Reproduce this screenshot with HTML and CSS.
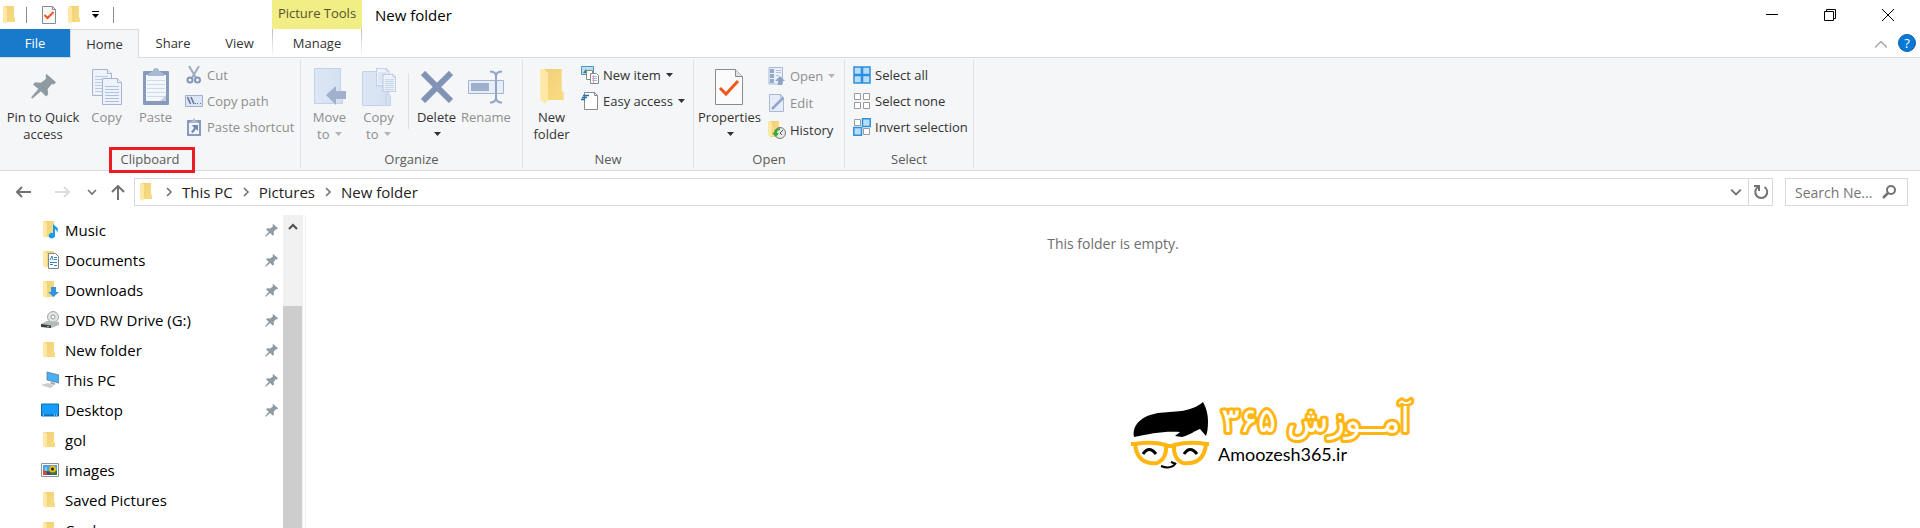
FILE: index.html
```html
<!DOCTYPE html>
<html lang="en">
<head>
  <meta charset="UTF-8">
  <title>New folder</title>
  <link rel="stylesheet" href="styles.css">
</head>
<body>

  <!-- shared icons -->
  <svg class="defs" width="0" height="0" aria-hidden="true">
    <defs>
      <linearGradient id="gold" x1="0" x2="1" y1="0" y2="1">
        <stop offset="0" stop-color="#f0d078"/>
        <stop offset="1" stop-color="#f9dc82"/>
      </linearGradient>
      <linearGradient id="pale" x1="0" x2="1">
        <stop offset="0" stop-color="#dde7f5"/>
        <stop offset="1" stop-color="#d3e0f2"/>
      </linearGradient>
    </defs>
    <symbol id="folder" viewBox="0 0 12 18">
      <path d="M2 0h9v11l1 1v4H2z" fill="url(#gold)"/>
      <path d="M0 0h2l2 2v13l-1 3-3-2z" fill="#ffe8a6"/>
    </symbol>
    <symbol id="check" viewBox="0 0 28 36">
      <path d="M.5.5h20l7 7v28H.5z" fill="#fbfbfb" stroke="#8b8b8b"/>
      <path d="M20.500.5v7h7" fill="#e0e0e0" stroke="#8b8b8b"/>
      <path d="M5 19l6 6L23 12" fill="none" stroke="#f1571a" stroke-width="3"/>
    </symbol>
    <symbol id="pin" viewBox="0 0 24 24">
      <path d="M15 0l9 8-2 2-2-.5-4 5 .5 5-2 2-5-5-8 7-1.500-1 7-8-5-4.500 2-2 5.500.500 5-4-.500-3z" fill="#8f9ba3"/>
    </symbol>
    <symbol id="pages" viewBox="0 0 30 36">
      <g fill="#eef3fb" stroke="#a3b5d3">
        <path d="M.5.5h15l4 4v22H.5z"/>
        <path d="M15.500.5v4h4"/>
        <path d="M3 7.500h13M3 10.500h13M3 13.500h13M3 16.500h13M3 19.500h13M3 22.500h13" stroke="#bccbe2"/>
        <path d="M10.500 9.500h15l4 4v22h-19z"/>
        <path d="M25.500 9.500v4h4"/>
        <path d="M13 17.500h14M13 20.500h14M13 23.500h14M13 26.500h14M13 29.500h14M13 32.500h14" stroke="#b1c1db"/>
      </g>
    </symbol>
    <symbol id="down" viewBox="0 0 7 4">
      <path d="M0 0h7L3.500 4z" fill="currentColor"/>
    </symbol>
    <symbol id="chevron" viewBox="0 0 10 10">
      <path d="M1 3l4 4 4-4" fill="none" stroke="currentColor" stroke-width="1.600"/>
    </symbol>
  </svg>

  <header class="titlebar">
    <div class="quick">
      <svg class="mini-folder"><use href="#folder"/></svg>
      <span class="bar"></span>
      <button class="quick-btn" aria-label="Properties">
        <svg width="14" height="18" viewBox="0 0 14 18"><path d="M.5.5h10l3 3v14H.5z" fill="#f8f8f8" stroke="#8b8b8b"/><path d="M10.500.5v3h3" fill="none" stroke="#8b8b8b"/><path d="M2.500 9l3 3L11.500 6" fill="none" stroke="#f1571a" stroke-width="2"/></svg>
      </button>
      <button class="quick-btn" aria-label="New folder"><svg class="mini-folder"><use href="#folder"/></svg></button>
      <button class="quick-btn" aria-label="Customize toolbar">
        <svg width="7" height="7" viewBox="0 0 7 7"><path d="M0 0h7v1H0zM0 3h7L3.500 7z"/></svg>
      </button>
      <span class="bar"></span>
    </div>
    <div class="tools">Picture Tools</div>
    <h1>New folder</h1>
    <div class="window-buttons">
      <button aria-label="Minimize"><svg width="12" height="12"><path d="M0 5.500h12" stroke="#000"/></svg></button>
      <button aria-label="Restore"><svg width="12" height="12" fill="none" stroke="#000"><path d="M.5 2.500h9v9h-9zM2.500 2.500v-2h9v9h-2"/></svg></button>
      <button aria-label="Close"><svg width="12" height="12"><path d="M0 0l12 12M12 0L0 12" stroke="#000"/></svg></button>
    </div>
  </header>

  <nav class="tabs">
    <button class="tab file">File</button>
    <button class="tab active">Home</button>
    <button class="tab share">Share</button>
    <button class="tab view">View</button>
    <button class="tab manage">Manage</button>
    <div class="tab-end">
      <button aria-label="Collapse ribbon"><svg width="12" height="7"><path d="M0 6.500l6-6 6 6" fill="none" stroke="#a8a8a8" stroke-width="1.500"/></svg></button>
      <button class="help" aria-label="Help">?</button>
    </div>
  </nav>

  <section class="ribbon">
    <div class="group clipboard">
      <div class="items">
        <button class="big pin-btn">
          <span class="pic"><svg width="25" height="25"><use href="#pin"/></svg></span>
          Pin to Quick<br>access
        </button>
        <button class="big off">
          <span class="pic"><svg width="30" height="36"><use href="#pages"/></svg></span>
          Copy
        </button>
        <button class="big off">
          <span class="pic">
            <svg width="26" height="37" viewBox="0 0 26 37">
              <rect y="3" width="26" height="34" rx="1" fill="#899bbd"/>
              <path d="M3 7h20v26H3z" fill="#f3f6fb"/>
              <path d="M4 12.500h18M4 16.500h18M4 20.500h18M4 24.500h18M4 28.500h18" stroke="#cfdaeb"/>
              <path d="M5 8V6l5-3q0-3 3-3t3 3l5 3v2z" fill="#aab9d2"/>
              <path d="M17 33h6v-6z" fill="#c3d0e4"/>
            </svg>
          </span>
          Paste
        </button>
        <div class="small-col">
          <button class="small off">
            <svg viewBox="0 0 18 18"><path d="M4 0l7 12M14 0L7 12" stroke="#9aabc8" stroke-width="2"/><g fill="none" stroke="#8195b8" stroke-width="2"><circle cx="5" cy="14" r="2.500"/><circle cx="12.500" cy="14" r="2.500"/></g></svg>
            Cut
          </button>
          <button class="small off">
            <svg viewBox="0 0 18 18"><path d="M.5 3.500h17v11H.5z" fill="#dbe5f3" stroke="#9fb1cf"/><path d="M2.500 5l3 7M6 5l3 7" stroke="#5d7499" stroke-width="1.500"/><path d="M10 11h1v1h-1zM12 11h1v1h-1zM15 11h1v1h-1z" fill="#5d7499"/></svg>
            Copy path
          </button>
          <button class="small off">
            <svg viewBox="0 0 18 18"><path d="M2 2h14v16H2z" fill="#899bbd"/><path d="M4 5h10v11H4z" fill="#f0f4fa"/><path d="M5 4l3-2q1-4 2 0l3 2v1H5z" fill="#aab9d2"/><path d="M7 7h6v6l-2-2-3 4-2-1 3-4z" fill="#7288ae"/></svg>
            Paste shortcut
          </button>
        </div>
      </div>
      <h2>Clipboard<span class="mark"></span></h2>
    </div>

    <div class="group organize">
      <div class="items">
        <button class="big off">
          <span class="pic">
            <svg width="32" height="37" viewBox="0 0 32 37"><path d="M.5.5h26v21l2 4v10H.5z" fill="url(#pale)" stroke="#c4d2e8"/><path d="M12 27l10-9v5h10v8H22v6z" fill="#a1b1cd"/></svg>
          </span>
          Move<br>to <svg class="down"><use href="#down"/></svg>
        </button>
        <button class="big off">
          <span class="pic">
            <svg width="34" height="38" viewBox="0 0 34 38"><path d="M.5 3.500h26v21l2 4v9H.5z" fill="url(#pale)" stroke="#c4d2e8"/><path d="M24 37V27l2-3" fill="none" stroke="#bfcee5"/><svg x="14" width="20" height="24"><use href="#pages"/></svg></svg>
          </span>
          Copy<br>to <svg class="down"><use href="#down"/></svg>
        </button>
        <span class="split"></span>
        <button class="big">
          <span class="pic"><svg width="32" height="32"><path d="M2 2l28 28M30 2L2 30" stroke="#8194b5" stroke-width="6"/></svg></span>
          Delete<br><svg class="down"><use href="#down"/></svg>
        </button>
        <button class="big off rename">
          <span class="pic">
            <svg width="36" height="34" viewBox="0 0 36 34"><path d="M.5 10.500h35v13H.5z" fill="#e6eefa" stroke="#a3b5d3"/><path d="M3 13h18v8H3z" fill="#9fb0cd"/><path d="M22 1.500q6 0 6 5v21q0 5-6 5M34 1.500q-6 0-6 5v21q0 5 6 5" fill="none" stroke="#91a4c4" stroke-width="2"/></svg>
          </span>
          Rename
        </button>
      </div>
      <h2>Organize</h2>
    </div>

    <div class="group new">
      <div class="items">
        <button class="big">
          <span class="pic"><svg width="24" height="35"><use href="#folder"/></svg></span>
          New<br>folder
        </button>
        <div class="small-col">
          <button class="small">
            <svg viewBox="0 0 18 18"><path d="M.5.5h12v8H.5z" fill="#b9def2" stroke="#4d93b8"/><path d="M2 7l3-4 2 4z" fill="#397b64"/><path d="M5.500 4.500h6v9h-6z" fill="#fff" stroke="#888"/><path d="M9.500 7.500h6l2 2v8h-8z" fill="#fff" stroke="#888"/><path d="M11 10.500h5M11 12.500h5M11 14.500h5" stroke="#9fb4ee"/><path d="M12.500 9v8" stroke="#f09a9a"/></svg>
            New item <svg class="down"><use href="#down"/></svg>
          </button>
          <button class="small">
            <svg viewBox="0 0 18 18"><path d="M3.500.5h10l3 3v14h-13z" fill="#fff" stroke="#888"/><path d="M13.500.5v3h3" fill="none" stroke="#888"/><path d="M2 3.500h6M1 5.500h5M0 7.500h4" stroke="#1f6fad" stroke-width="1.500"/></svg>
            Easy access <svg class="down"><use href="#down"/></svg>
          </button>
        </div>
      </div>
      <h2>New</h2>
    </div>

    <div class="group open">
      <div class="items">
        <button class="big properties">
          <span class="pic"><svg width="28" height="36"><use href="#check"/></svg></span>
          Properties<br><svg class="down"><use href="#down"/></svg>
        </button>
        <div class="small-col">
          <button class="small off">
            <svg viewBox="0 0 18 18"><path d="M1 .5h13.500V17H1z" fill="#eaf0f9" stroke="#a9b9d5"/><path d="M2 2h4v4H2zM2 7h4v4H2zM2 12h4v4H2z" fill="#95a8c9"/><path d="M8 3.500h5M8 5.500h5M8 8.500h3" stroke="#b4c3dc"/><path d="M12 9l5 5h-3v4h-4v-4H7z" fill="#8fa3c5"/></svg>
            Open <svg class="down"><use href="#down"/></svg>
          </button>
          <button class="small off">
            <svg viewBox="0 0 18 18"><path d="M1.500.5h11l3 3v14h-14z" fill="#e6edf8" stroke="#a9b9d5"/><path d="M12.500.5v3h3" fill="none" stroke="#a9b9d5"/><path d="M4 15l11-11" stroke="#94a7c8" stroke-width="2.500"/></svg>
            Edit
          </button>
          <button class="small">
            <svg viewBox="0 0 18 18"><path d="M2 0h9v16H2z" fill="url(#gold)"/><path d="M0 0h2l2 2v13H1L0 14z" fill="#ffe8a6"/><circle cx="12" cy="12" r="5.500" fill="#e8e8e8" stroke="#777"/><path d="M12 12l3-3M12 12l2 2" fill="none" stroke="#555"/><path d="M12 7q-5 0-6 5H4l4 4 3-4H9q0-3 3-3z" fill="#3aa935"/></svg>
            History
          </button>
        </div>
      </div>
      <h2>Open</h2>
    </div>

    <div class="group select">
      <div class="items">
        <div class="small-col">
          <button class="small">
            <svg viewBox="0 0 18 18"><path d="M1 1h7.500v7.500H1zM9.500 1H17v7.500H9.500zM1 9.500h7.500V17H1zM9.500 9.500H17V17H9.500z" fill="#b5defb" stroke="#2e8fdd" stroke-width="1.500"/></svg>
            Select all
          </button>
          <button class="small">
            <svg viewBox="0 0 18 18"><path d="M1.500 1.500h6v6h-6zM10.500 1.500h6v6h-6zM1.500 10.500h6v6h-6zM10.500 10.500h6v6h-6z" fill="#fff" stroke="#9a9a9a"/></svg>
            Select none
          </button>
          <button class="small">
            <svg viewBox="0 0 18 18"><path d="M1.500 1.500h6v6h-6zM10.500 10.500h6v6h-6z" fill="#fff" stroke="#9a9a9a"/><path d="M9.500.8h7.700v7.700H9.500zM.8 9.500h7.700v7.700H.8z" fill="#b5defb" stroke="#2e8fdd" stroke-width="1.500"/></svg>
            Invert selection
          </button>
        </div>
      </div>
      <h2>Select</h2>
    </div>
  </section>

  <div class="address-row">
    <div class="arrows">
      <button aria-label="Back"><svg width="15" height="12"><path d="M15 6H1M6 1L1 6l5 5" fill="none" stroke="#727272" stroke-width="2"/></svg></button>
      <button aria-label="Forward"><svg width="15" height="12"><path d="M0 6h14M9 1l5 5-5 5" fill="none" stroke="#dcdcdc" stroke-width="2"/></svg></button>
      <button class="recent" aria-label="Recent locations"><svg width="10" height="10"><use href="#chevron"/></svg></button>
      <button aria-label="Up"><svg width="14" height="15"><path d="M7 15V1M1 7l6-6 6 6" fill="none" stroke="#727272" stroke-width="2"/></svg></button>
    </div>
    <div class="address">
      <svg class="mini-folder"><use href="#folder"/></svg>
      <svg class="crumb-arrow"><use href="#chevron"/></svg>
      <a href="#">This PC</a>
      <svg class="crumb-arrow"><use href="#chevron"/></svg>
      <a href="#">Pictures</a>
      <svg class="crumb-arrow"><use href="#chevron"/></svg>
      <a href="#">New folder</a>
      <button class="history" aria-label="Previous locations"><svg width="12" height="12"><use href="#chevron"/></svg></button>
      <button class="refresh" aria-label="Refresh">
        <svg width="16" height="16" viewBox="0 0 16 16"><path d="M5 3A6 6 0 1 0 11.500 3" fill="none" stroke="#727272" stroke-width="2"/><path d="M1 2h5v5" fill="none" stroke="#727272" stroke-width="2"/></svg>
      </button>
    </div>
    <label class="search">
      <input type="text" aria-label="Search New folder" placeholder="Search Ne...">
      <svg width="14" height="14"><circle cx="9" cy="5" r="4" fill="none" stroke="#727272" stroke-width="2"/><path d="M6 8l-5 5" stroke="#727272" stroke-width="2.500"/></svg>
    </label>
  </div>

  <main class="content">
    <aside class="sidebar">
      <ul class="places">
        <li>
          <svg class="icon" viewBox="0 0 18 18"><path d="M4 0h9v16H4z" fill="url(#gold)"/><path d="M2 0h2l2 2v13l-1 2-3-2z" fill="#ffe8a6"/><path d="M12 2c0 3 5 3 5 7l-1 3c0-3-1-3-2-4v6a3.200 2.800 0 1 1-2-2z" fill="#149cf0"/></svg>
          <a href="#">Music</a><svg class="pin"><use href="#pin"/></svg>
        </li>
        <li>
          <svg class="icon" viewBox="0 0 18 18"><path d="M4 0h9v16H4z" fill="url(#gold)"/><path d="M2 0h2l2 2v13l-1 2-3-2z" fill="#ffe8a6"/><path d="M7.500 2.500h7l3 3v12h-10z" fill="#fff" stroke="#7d858a"/><path d="M9 9l2-4 1 4M13 6.500h3M13 8.500h3M9 11.500h7M9 13.500h3M13 14.500h3" fill="none" stroke="#3183bd"/></svg>
          <a href="#">Documents</a><svg class="pin"><use href="#pin"/></svg>
        </li>
        <li>
          <svg class="icon" viewBox="0 0 18 18"><path d="M4 0h9v16H4z" fill="url(#gold)"/><path d="M2 0h2l2 2v13l-1 2-3-2z" fill="#ffe8a6"/><path d="M10 6h5v5h3l-5.500 5L7 11h3z" fill="#3292e4"/></svg>
          <a href="#">Downloads</a><svg class="pin"><use href="#pin"/></svg>
        </li>
        <li>
          <svg class="icon" viewBox="0 0 18 18"><circle cx="12" cy="6" r="5.500" fill="#dfe3e5" stroke="#a5a9ab"/><circle cx="12" cy="6" r="2" fill="#fff" stroke="#999"/><path d="M0 13l6-3 12 1v3l-8 3-10-2z" fill="#b6b9bb"/><path d="M0 13l10 1.500V17L0 16z" fill="#3d4042"/><path d="M6 15h2v1H6z" fill="#6fd45b"/></svg>
          <a href="#">DVD RW Drive (G:)</a><svg class="pin"><use href="#pin"/></svg>
        </li>
        <li>
          <svg class="icon" viewBox="0 0 18 18"><path d="M4 1h9v10l1 1v4H4z" fill="url(#gold)"/><path d="M2 1h2l2 2v12l-1 2-3-2z" fill="#ffe8a6"/></svg>
          <a href="#">New folder</a><svg class="pin"><use href="#pin"/></svg>
        </li>
        <li>
          <svg class="icon" viewBox="0 0 18 18"><path d="M6 1l12 3v8L6 9z" fill="#49aef2" stroke="#5b7c92" stroke-width=".8"/><path d="M10 11l4 1v2l-5-1z" fill="#9eabb3"/><path d="M0 14l7-2 6 3-4 2z" fill="#c6cdd1"/></svg>
          <a href="#">This PC</a><svg class="pin"><use href="#pin"/></svg>
        </li>
        <li>
          <svg class="icon" viewBox="0 0 18 18"><path d="M.5 3h17v12H.5z" fill="#169dfb" stroke="#0a6cb5"/><path d="M1 14h16" stroke="#0a5c9c"/><path d="M2 14h1M13 14h1M15 14h1" stroke="#fff"/></svg>
          <a href="#">Desktop</a><svg class="pin"><use href="#pin"/></svg>
        </li>
        <li>
          <svg class="icon" viewBox="0 0 18 18"><path d="M4 1h9v10l1 1v4H4z" fill="url(#gold)"/><path d="M2 1h2l2 2v12l-1 2-3-2z" fill="#ffe8a6"/></svg>
          <a href="#">gol</a>
        </li>
        <li>
          <svg class="icon" viewBox="0 0 18 18"><path d="M.5 2.500h17v13H.5z" fill="#fff" stroke="#959595"/><path d="M2 4h14v6H2z" fill="#4b9fe8"/><path d="M2 10h14v4H2z" fill="#337a36"/><path d="M2 9l3 2 1 3H2z" fill="#e6492d"/><path d="M4 6h2v4H4z" fill="#8bc6f2"/><circle cx="11.500" cy="8" r="3.500" fill="#e8b91a"/><circle cx="11.500" cy="8" r="1.500" fill="#332318"/><path d="M6 11h3v3H6z" fill="#503ba1"/></svg>
          <a href="#">images</a>
        </li>
        <li>
          <svg class="icon" viewBox="0 0 18 18"><path d="M4 1h9v10l1 1v4H4z" fill="url(#gold)"/><path d="M2 1h2l2 2v12l-1 2-3-2z" fill="#ffe8a6"/></svg>
          <a href="#">Saved Pictures</a>
        </li>
        <li>
          <svg class="icon" viewBox="0 0 18 18"><path d="M4 1h9v10l1 1v4H4z" fill="url(#gold)"/><path d="M2 1h2l2 2v12l-1 2-3-2z" fill="#ffe8a6"/></svg>
          <a href="#">Cool</a>
        </li>
      </ul>
      <div class="scrollbar">
        <button aria-label="Scroll up"><svg width="10" height="7"><path d="M1 6l4-4 4 4" fill="none" stroke="#505050" stroke-width="2"/></svg></button>
        <div class="thumb"></div>
      </div>
    </aside>

    <div class="files">
      <p>This folder is empty.</p>
      <div class="brand">
        <svg class="face" width="80" height="70" viewBox="0 0 80 70">
          <path d="M4 36C2 24 11 15 28 12C44 10 60 12 73 1Q78 10 78 20Q78 30 76 35L70 28C64 30 62 33 52 36L45 35L50 31C32 30 20 33 4 36z"/>
          <g fill="none" stroke="#ffb612" stroke-width="4">
            <path d="M5 43Q22 40 36 44Q37 58 27 62Q7 64 5 43zM44 44Q60 40 76 43Q74 64 53 62Q43 58 44 44z"/>
            <path d="M1 43h5M36 45h8M75 43h4"/>
          </g>
          <g fill="none" stroke="#000">
            <path d="M13 53q6-9 13 0M54 53q6-9 13 0" stroke-width="3"/>
            <path d="M31 65q10 4 15-3M41 61l5 2" stroke-width="2"/>
          </g>
        </svg>
        <div class="brand-text">
          <svg class="wordmark" width="198" height="43">
            <text x="192" y="31" direction="rtl">آمــوزش ۳۶۵</text>
          </svg>
          <span>Amoozesh365.ir</span>
        </div>
      </div>
    </div>
  </main>

</body>
</html>
```
FILE: styles.css
```css
* {
  box-sizing: border-box;
}

body {
  margin: 0;
  height: 100vh;
  overflow: hidden;
  display: flex;
  flex-direction: column;
  background: #fff;
  color: #000;
  font-family: "Open Sans", "Noto Sans", sans-serif;
  font-size: 15px;
}

button {
  padding: 0;
  border: none;
  background: none;
  color: #333;
  font-family: inherit;
  font-size: 13px;
}

a {
  color: inherit;
  text-decoration: none;
}

svg {
  flex: none;
}

.defs {
  position: absolute;
}

.mini-folder {
  width: 12px;
  height: 18px;
}

/* title bar */
.titlebar {
  height: 29px;
  display: flex;
  align-items: center;
}

.quick {
  width: 272px;
  display: flex;
  align-items: center;
  padding-left: 3px;
}

.quick svg {
  display: block;
}

.bar {
  width: 1px;
  height: 16px;
  margin: 0 15px 0 11px;
  background: #8c8c8c;
}

.quick-btn {
  margin-right: 12px;
}

.quick-btn + .bar {
  margin-left: 2px;
}

.tools {
  width: 90px;
  height: 29px;
  line-height: 27px;
  text-align: center;
  font-size: 13px;
  color: #55542f;
  background: #f0ee84;
}

h1 {
  margin: 0 0 0 13px;
  font-size: 15px;
  font-weight: normal;
}

.window-buttons {
  margin-left: auto;
  padding-right: 3px;
  display: flex;
}

.window-buttons button {
  width: 58px;
  height: 28px;
}

.window-buttons svg {
  display: block;
  margin: auto;
}

/* tabs */
.tabs {
  display: flex;
  height: 29px;
  border-bottom: 1px solid #dadbdc;
}

.tab {
  height: 28px;
}

.file {
  width: 70px;
  color: #fff;
  background: #1979ca;
}

.active {
  width: 69px;
  height: 29px;
  border: 1px solid #dadbdc;
  border-bottom: none;
  background: #f5f6f7;
}

.share {
  width: 68px;
}

.view {
  width: 65px;
}

.manage {
  width: 90px;
  border: 1px solid;
  border-width: 0 1px;
  border-image: linear-gradient(#bbb, #fff) 1;
}

.tab-end {
  margin-left: auto;
  display: flex;
  align-items: center;
  gap: 11px;
  padding-right: 4px;
}

.help {
  width: 18px;
  height: 18px;
  line-height: 16px;
  border: 1px solid #0c62ad;
  border-radius: 50%;
  color: #fff;
  background: #0a78d6;
}

/* ribbon */
.ribbon {
  display: flex;
  padding: 2px 0;
  background: #f5f6f7;
  border-bottom: 1px solid #dadbdc;
}

.group {
  height: 108px;
  display: flex;
  flex-direction: column;
  justify-content: space-between;
  border-right: 1px solid #e0e1e3;
}

.clipboard {
  width: 301px;
}

.organize {
  width: 222px;
}

.new {
  width: 171px;
}

.open {
  width: 151px;
}

.select {
  width: 129px;
}

.items {
  display: flex;
  align-items: flex-start;
  padding: 2px 0 0 4px;
}

.big {
  width: 49px;
  line-height: 17px;
  white-space: nowrap;
  display: block;
}

.pin-btn {
  width: 78px;
}

.properties {
  width: 62px;
}

.pic {
  height: 47px;
  padding-top: 2px;
  display: flex;
  align-items: center;
  justify-content: center;
}

.off {
  color: #8e8e8e;
}

.down {
  width: 7px;
  height: 4px;
  vertical-align: 3px;
  margin-left: 2px;
}

.off .down {
  color: #b4b4b4;
}

.split {
  width: 1px;
  height: 56px;
  margin: 11px 3px 0 5px;
  background: #dfe0e2;
}

.small-col {
  padding-left: 5px;
}

.small {
  height: 26px;
  display: flex;
  align-items: center;
  white-space: nowrap;
}

.small svg:first-child {
  width: 18px;
  height: 18px;
  margin-right: 4px;
}

.small .down {
  margin-left: 5px;
}

.open .small-col {
  padding-left: 8px;
}

.select .small-col {
  padding-left: 4px;
}

.open .small {
  height: 27px;
}

h2 {
  position: relative;
  margin: 0;
  line-height: 18px;
  text-align: center;
  font-size: 13px;
  font-weight: normal;
  color: #5a5a5a;
}

.mark {
  position: absolute;
  top: -3px;
  left: 109px;
  width: 86px;
  height: 26px;
  border: 3px solid #ed1c24;
}

/* address bar */
.address-row {
  display: flex;
  align-items: center;
  padding: 7px 12px 9px 16px;
  color: #222;
}

.arrows {
  width: 118px;
  display: flex;
  align-items: center;
}

.arrows svg,
.history svg,
.refresh svg {
  display: block;
  margin: auto;
}

.arrows button + button {
  margin-left: 24px;
}

.arrows .recent {
  margin-left: 17px;
  color: #727272;
}

.arrows .recent + button {
  margin-left: 14px;
}

.address {
  flex: 1;
  height: 28px;
  display: flex;
  align-items: center;
  padding-left: 5px;
  border: 1px solid #d9d9d9;
}

.crumb-arrow {
  width: 10px;
  height: 10px;
  margin: 0 8px;
  color: #727272;
  transform: rotate(-90deg);
}

.mini-folder + .crumb-arrow {
  margin-left: 12px;
}

.history {
  width: 24px;
  margin-left: auto;
  color: #727272;
}

.refresh {
  width: 24px;
  height: 26px;
  border-left: 1px solid #d9d9d9;
}

.search {
  width: 123px;
  height: 28px;
  margin-left: 12px;
  display: flex;
  align-items: center;
  padding: 0 11px 0 9px;
  border: 1px solid #d9d9d9;
}

.search input {
  flex: 1;
  min-width: 0;
  padding: 0;
  border: none;
  outline: none;
  background: none;
  font-family: inherit;
  font-size: 14px;
}

.search input::placeholder {
  color: #757575;
}

/* content */
.content {
  flex: 1;
  min-height: 0;
  display: flex;
}

.sidebar {
  width: 306px;
  display: flex;
  border-right: 1px solid #f0f0f0;
}

.places {
  flex: 1;
  margin: 0;
  padding: 0 5px 0 41px;
  list-style: none;
}

.places li {
  height: 30px;
  display: flex;
  align-items: center;
}

.icon {
  width: 18px;
  height: 18px;
  margin-right: 6px;
}

.pin {
  width: 13px;
  height: 13px;
  margin-left: auto;
}

.scrollbar {
  width: 20px;
  margin-right: 2px;
  display: flex;
  flex-direction: column;
  background: #f0f0f0;
}

.scrollbar button {
  height: 20px;
}

.thumb {
  flex: 1;
  margin: 71px 1px 0 0;
  background: #cdcdcd;
}

.files {
  flex: 1;
  position: relative;
}

.files p {
  margin: 19px 0 0;
  text-align: center;
  font-size: 14px;
  color: #6d6d6d;
}

/* watermark over the file area */
.brand {
  position: absolute;
  top: 186px;
  left: 824px;
  display: flex;
}

.face {
  overflow: visible;
}

.brand-text {
  margin-left: 8px;
  display: flex;
  flex-direction: column;
}

.wordmark {
  overflow: visible;
}

.wordmark text {
  font-family: "DejaVu Sans", sans-serif;
  font-size: 34px;
  fill: #fff;
  stroke: #ffb612;
  stroke-width: 6px;
  stroke-linejoin: round;
  paint-order: stroke;
}

.brand-text span {
  line-height: 20px;
  font-family: Lato, sans-serif;
  font-size: 18px;
}
```
